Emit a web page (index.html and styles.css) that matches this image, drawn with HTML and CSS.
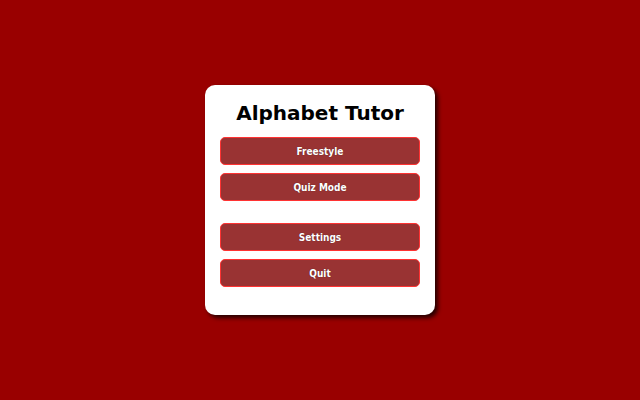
FILE: index.html
```html
<!DOCTYPE html>
<html>
<head>
<meta charset="utf-8">
<link rel="stylesheet" href="styles.css">
</head>
<body>
<div class="page">
  <div class="card">
    <h1 class="title">Alphabet Tutor</h1>
    <div class="group">
      <button class="btn">Freestyle</button>
      <button class="btn">Quiz Mode</button>
    </div>
    <div class="group">
      <button class="btn">Settings</button>
      <button class="btn">Quit</button>
    </div>
  </div>
</div>
</body>
</html>
```

FILE: styles.css
```css
html, body {
  margin: 0;
  padding: 0;
  height: 100%;
  background: #990000;
  font-family: "DejaVu Sans", Verdana, sans-serif;
}
.page {
  height: 400px;
  display: flex;
  justify-content: center;
  padding-top: 85px;
  box-sizing: border-box;
}
.card {
  width: 230px;
  height: 230px;
  box-sizing: border-box;
  background: #ffffff;
  border-radius: 10px;
  box-shadow: 3px 3px 4px rgba(0, 0, 0, 0.75);
  padding: 14px 15px 0;
  display: flex;
  flex-direction: column;
  gap: 22px;
}
.title {
  margin: 0;
  text-align: center;
  font-size: 20px;
  font-weight: bold;
  color: #000;
  line-height: 28px;
  height: 38px;
}
.group {
  display: flex;
  flex-direction: column;
  gap: 8px;
}
.card .group:first-of-type {
  margin-top: -22px;
}
.btn {
  width: 200px;
  height: 28px;
  box-sizing: border-box;
  background: #993333;
  border: 1px solid #ff3333;
  border-radius: 5px;
  color: #ffffff;
  font-family: "DejaVu Sans Condensed", "DejaVu Sans", sans-serif;
  font-stretch: condensed;
  font-size: 10px;
  font-weight: bold;
  text-shadow: 0 0 1px rgba(0,0,0,0.5);
  padding: 0;
  margin: 0;
}
```
